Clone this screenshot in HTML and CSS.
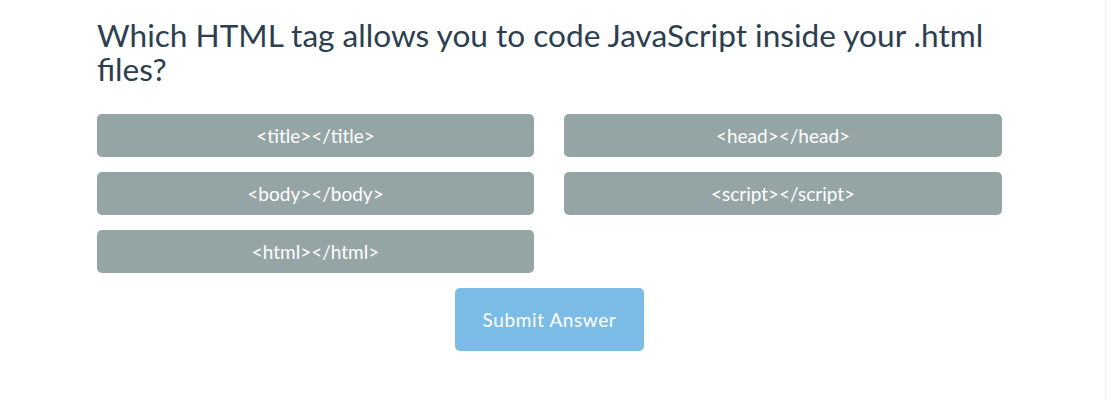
FILE: index.html
```html
<!DOCTYPE html>
<html lang="en">
<head>
    <meta charset="UTF-8">
    <title>Quiz</title>
    <link rel="stylesheet" href="styles.css">
</head>
<body>
    <div class="quiz-container">
        <h2 class="question">Which HTML tag allows you to code JavaScript inside your .html files?</h2>
        <div class="choices">
            <button class="choice">&lt;title&gt;&lt;/title&gt;</button>
            <button class="choice">&lt;head&gt;&lt;/head&gt;</button>
            <button class="choice">&lt;body&gt;&lt;/body&gt;</button>
            <button class="choice">&lt;script&gt;&lt;/script&gt;</button>
            <button class="choice">&lt;html&gt;&lt;/html&gt;</button>
        </div>
        <div class="submit-row">
            <button class="submit-btn" disabled>Submit Answer</button>
        </div>
    </div>
</body>
</html>
```

FILE: styles.css
```css
body {
    margin: 0;
    font-family: Lato, 'Open Sans', sans-serif;
    background-color: #ffffff;
    color: #2c3e50;
}
body::after {
    /* faint page edge on the right */
    content: '';
    position: fixed;
    top: 0;
    right: 5px;
    width: 1px;
    height: 100%;
    background-color: #f0f0f0;
}
.quiz-container {
    width: 905px;
    margin-left: 97px;
    padding-top: 18px;
}
.question {
    margin: 0 0 28px 0;
    font-size: 31.6px;
    font-weight: normal;
    line-height: 34px;
}
.choices {
    display: grid;
    grid-template-columns: 437px 438px;
    column-gap: 30px;
    row-gap: 15px;
}
.choice {
    height: 43px;
    background-color: #95a5a6;
    color: #ffffff;
    border: none;
    border-radius: 5px;
    font-family: Lato, 'Open Sans', sans-serif;
    font-size: 19px;
    cursor: pointer;
}
.submit-row {
    display: flex;
    justify-content: center;
    margin-top: 15px;
}
.submit-btn {
    width: 189px;
    height: 63px;
    background-color: #7bbce7;
    color: #ffffff;
    border: none;
    border-radius: 5px;
    font-family: Lato, 'Open Sans', sans-serif;
    font-size: 19px;
    letter-spacing: 0.6px;
}
```
